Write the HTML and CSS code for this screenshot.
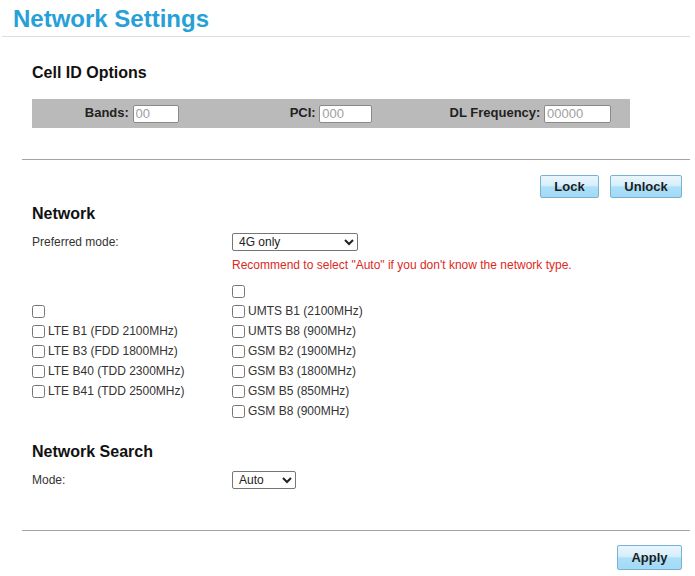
FILE: index.html
```html
<!DOCTYPE html>
<html lang="en">
<head>
    <meta charset="UTF-8">
    <meta name="viewport" content="width=device-width, initial-scale=1.0">
    <title>Network Settings</title>
    <link rel="stylesheet" href="styles.css">
</head>
<body>

<header class="page-header">
    <h1>Network Settings</h1>
</header>

<div class="content">
    <div class="section">
        <h2>Cell ID Options</h2>
        <div class="cell-bar">
            <div class="cell-item">
                <label for="bands">Bands:</label>
                <input type="text" id="bands" class="in-bands" placeholder="00">
            </div>
            <div class="cell-item">
                <label for="pci">PCI:</label>
                <input type="text" id="pci" class="in-pci" placeholder="000">
            </div>
            <div class="cell-item">
                <label for="dlfreq">DL Frequency:</label>
                <input type="text" id="dlfreq" class="in-freq" placeholder="00000">
            </div>
        </div>
    </div>

    <div class="divider divider-top"></div>

    <div class="section">
        <div class="actions actions-lock">
            <button class="btn btn-lock">Lock</button>
            <button class="btn btn-unlock">Unlock</button>
        </div>

        <h2 class="network-title">Network</h2>
        <div class="form-row">
            <span class="row-label">Preferred mode:</span>
            <select class="sel-mode">
                <option>4G only</option>
                <option>Auto</option>
                <option>3G only</option>
                <option>2G only</option>
            </select>
        </div>
        <div class="hint">Recommend to select "Auto" if you don't know the network type.</div>

        <div class="band-grid">
            <div class="band-col">
                <label class="band"><input type="checkbox"></label>
                <label class="band"><input type="checkbox">LTE B1 (FDD 2100MHz)</label>
                <label class="band"><input type="checkbox">LTE B3 (FDD 1800MHz)</label>
                <label class="band"><input type="checkbox">LTE B40 (TDD 2300MHz)</label>
                <label class="band"><input type="checkbox">LTE B41 (TDD 2500MHz)</label>
            </div>
            <div class="band-col">
                <label class="band"><input type="checkbox"></label>
                <label class="band"><input type="checkbox">UMTS B1 (2100MHz)</label>
                <label class="band"><input type="checkbox">UMTS B8 (900MHz)</label>
                <label class="band"><input type="checkbox">GSM B2 (1900MHz)</label>
                <label class="band"><input type="checkbox">GSM B3 (1800MHz)</label>
                <label class="band"><input type="checkbox">GSM B5 (850MHz)</label>
                <label class="band"><input type="checkbox">GSM B8 (900MHz)</label>
            </div>
        </div>

        <h2 class="search-title">Network Search</h2>
        <div class="form-row search-row">
            <span class="row-label">Mode:</span>
            <select class="sel-search">
                <option>Auto</option>
                <option>Manual</option>
            </select>
        </div>
    </div>

    <div class="divider divider-bottom"></div>

    <div class="section">
        <div class="actions actions-apply">
            <button class="btn btn-apply">Apply</button>
        </div>
    </div>
</div>

</body>
</html>
```

FILE: styles.css
```css
body {
    font-family: "Liberation Sans", Arial, sans-serif;
    font-size: 12px;
    color: #333;
    background-color: #fff;
    margin: 0;
    padding: 0;
}
.page-header {
    margin: 0 5px 0 2px;
    padding: 2px 0 0 11px;
    border-bottom: 1px solid #dedede;
}
h1 {
    margin: 0;
    font-size: 24px;
    line-height: 34px;
    font-weight: bold;
    color: #27a0d7;
}
.content {
    margin: 0 5px 0 22px;
}
.section {
    padding: 0 8px 0 10px;
}
h2 {
    margin: 0;
    font-size: 16px;
    line-height: 20px;
    font-weight: bold;
    color: #111;
}
.section h2:first-child {
    padding-top: 26px;
}

/* cell id bar */
.cell-bar {
    display: grid;
    grid-template-columns: 1fr 1fr 1fr;
    align-items: center;
    width: 598px;
    height: 29px;
    margin-top: 16px;
    background-color: #bababa;
}
.cell-item {
    text-align: center;
    font-size: 13px;
    font-weight: bold;
    color: #222;
}
.cell-item input {
    box-sizing: border-box;
    height: 18px;
    padding: 0 2px;
    margin: 0;
    vertical-align: middle;
    font-family: "Liberation Sans", Arial, sans-serif;
    font-size: 13px;
    border: 1px solid #8a8a8a;
    border-radius: 2px;
    background: #fff;
}
.cell-item input::placeholder {
    color: #a0a0a0;
}
.in-bands { width: 46px; }
.in-pci { width: 53px; }
.in-freq { width: 67px; }

.divider {
    border-top: 1px solid #a3a3a3;
}
.divider-top {
    margin-top: 31px;
}
.divider-bottom {
    margin-top: 38px;
}

/* buttons */
.actions {
    display: flex;
    justify-content: flex-end;
    gap: 11px;
}
.actions-lock {
    padding-top: 15px;
}
.actions-apply {
    padding-top: 14px;
}
.btn {
    height: 23px;
    padding: 0;
    font-family: "Liberation Sans", Arial, sans-serif;
    font-size: 13px;
    font-weight: bold;
    color: #1d1d1d;
    border: 1px solid #78b3d6;
    border-radius: 2px;
    background: linear-gradient(#eaf6fd 0%, #d6eefb 45%, #ade0f8 52%, #a2d9f5 100%);
    cursor: pointer;
}
.btn:hover {
    background: linear-gradient(#f2faff 0%, #def2fc 45%, #b8e5fa 52%, #abdef7 100%);
}
.btn-lock { width: 59px; }
.btn-unlock { width: 72px; }
.btn-apply { width: 65px; height: 25px; }

.network-title {
    margin-top: 6px;
}

/* form rows */
.form-row {
    display: grid;
    grid-template-columns: 200px auto;
    align-items: center;
    height: 24px;
    margin-top: 6px;
}
.row-label {
    line-height: 14px;
}
select {
    box-sizing: border-box;
    height: 18px;
    padding: 0 2px;
    font-family: "Liberation Sans", Arial, sans-serif;
    font-size: 12px;
    color: #222;
    border: 1px solid #767676;
    border-radius: 2px;
    background: #fff;
}
.sel-mode { width: 126px; }
.sel-search { width: 64px; }

.hint {
    margin-left: 200px;
    line-height: 22px;
    color: #dc2a24;
}

/* band checkboxes */
.band-grid {
    display: grid;
    grid-template-columns: 200px auto;
    align-items: center;
    margin-top: 5px;
}
.band {
    display: flex;
    align-items: center;
    height: 20px;
    color: #333;
}
.band input {
    width: 13px;
    height: 13px;
    margin: 0 3px 0 0;
}

.search-title {
    margin-top: 21px;
}
.search-row {
    margin-top: 6px;
}
```
